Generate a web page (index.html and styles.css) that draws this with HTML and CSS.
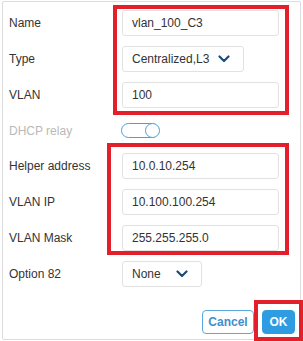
FILE: index.html
```html
<!DOCTYPE html>
<html>
<head>
<meta charset="utf-8">
<link rel="stylesheet" href="styles.css">
</head>
<body>
<div class="panel">
  <div class="form">
    <div class="row"><span class="label">Name</span><div class="field w-wide">vlan_100_C3</div></div>
    <div class="row"><span class="label">Type</span><div class="field select w-type"><span>Centralized,L3</span><svg class="chev" width="12" height="8" viewBox="0 0 12 8"><polyline points="1.5,1.5 6,6 10.5,1.5" fill="none" stroke="#1d4b77" stroke-width="2.2" stroke-linecap="round" stroke-linejoin="round"/></svg></div></div>
    <div class="row"><span class="label">VLAN</span><div class="field w-wide">100</div></div>
    <div class="row row-toggle"><span class="label muted">DHCP relay</span><div class="toggle"><span class="knob"></span></div></div>
    <div class="row"><span class="label">Helper address</span><div class="field w-wide">10.0.10.254</div></div>
    <div class="row"><span class="label">VLAN IP</span><div class="field w-wide">10.100.100.254</div></div>
    <div class="row"><span class="label">VLAN Mask</span><div class="field w-wide">255.255.255.0</div></div>
    <div class="row"><span class="label">Option 82</span><div class="field select w-opt"><span>None</span><svg class="chev" width="12" height="8" viewBox="0 0 12 8"><polyline points="1.5,1.5 6,6 10.5,1.5" fill="none" stroke="#1d4b77" stroke-width="2.2" stroke-linecap="round" stroke-linejoin="round"/></svg></div></div>
  </div>
  <div class="actions">
    <button class="btn btn-cancel">Cancel</button>
    <button class="btn btn-ok">OK</button>
  </div>
</div>
<div class="mark mark-1"></div>
<div class="mark mark-2"></div>
<div class="mark mark-3"></div>
</body>
</html>
```
FILE: styles.css
```css
html, body {
  margin: 0;
  padding: 0;
  background: #ffffff;
}
body {
  position: relative;
  width: 303px;
  height: 341px;
  overflow: hidden;
  font-family: "Liberation Sans", Arial, sans-serif;
  font-size: 12px;
  color: #333333;
}
.panel {
  box-sizing: border-box;
  margin: 1px 0 0 2px;
  width: 299px;
  height: 339px;
  border: 1px solid #dcdcdc;
  border-radius: 2px;
  padding: 8px 5px 0 6px;
}
.form {
  display: flex;
  flex-direction: column;
  gap: 10px;
}
.row {
  display: grid;
  grid-template-columns: 113px auto;
  align-items: center;
  height: 26px;
}
.row-toggle {
  height: 25px;
}
.label {
  white-space: nowrap;
}
.muted {
  color: #b9b9b9;
}
.field {
  box-sizing: border-box;
  height: 26px;
  border: 1px solid #e2e2e2;
  border-radius: 3px;
  padding: 0 0 0 9px;
  display: flex;
  align-items: center;
  color: #333333;
  background: #fff;
}
.w-wide { width: 157px; }
.w-type { width: 122px; }
.w-opt { width: 80px; }
.select {
  justify-content: space-between;
  padding-right: 13px;
}
.chev {
  display: block;
}
.toggle {
  box-sizing: border-box;
  width: 38px;
  height: 15px;
  border: 1.5px solid #4aa0dc;
  border-radius: 8px;
  position: relative;
  margin-left: -1px;
}
.knob {
  position: absolute;
  right: -1.5px;
  top: -1.5px;
  box-sizing: border-box;
  width: 15px;
  height: 15px;
  border: 1.5px solid #4aa0dc;
  border-radius: 50%;
  background: #fff;
}
.actions {
  display: flex;
  justify-content: flex-end;
  gap: 8px;
  margin-top: 23px;
}
.btn {
  box-sizing: border-box;
  height: 24px;
  border-radius: 4px;
  font-family: "Liberation Sans", Arial, sans-serif;
  font-size: 12px;
  font-weight: bold;
  padding: 0;
  cursor: pointer;
}
.btn-cancel {
  width: 52px;
  background: #fff;
  border: 1px solid #5aa9dd;
  color: #3e8fcc;
}
.btn-ok {
  width: 33px;
  background: #2f9be0;
  border: 1px solid #2f9be0;
  color: #fff;
}
.mark {
  position: absolute;
  box-sizing: border-box;
  border: 4px solid #e21f2b;
}
.mark-1 { left: 113px; top: 5px; width: 176px; height: 110px; }
.mark-2 { left: 107px; top: 143px; width: 182px; height: 112px; }
.mark-3 { left: 254px; top: 300px; width: 49px; height: 41px; }
```
